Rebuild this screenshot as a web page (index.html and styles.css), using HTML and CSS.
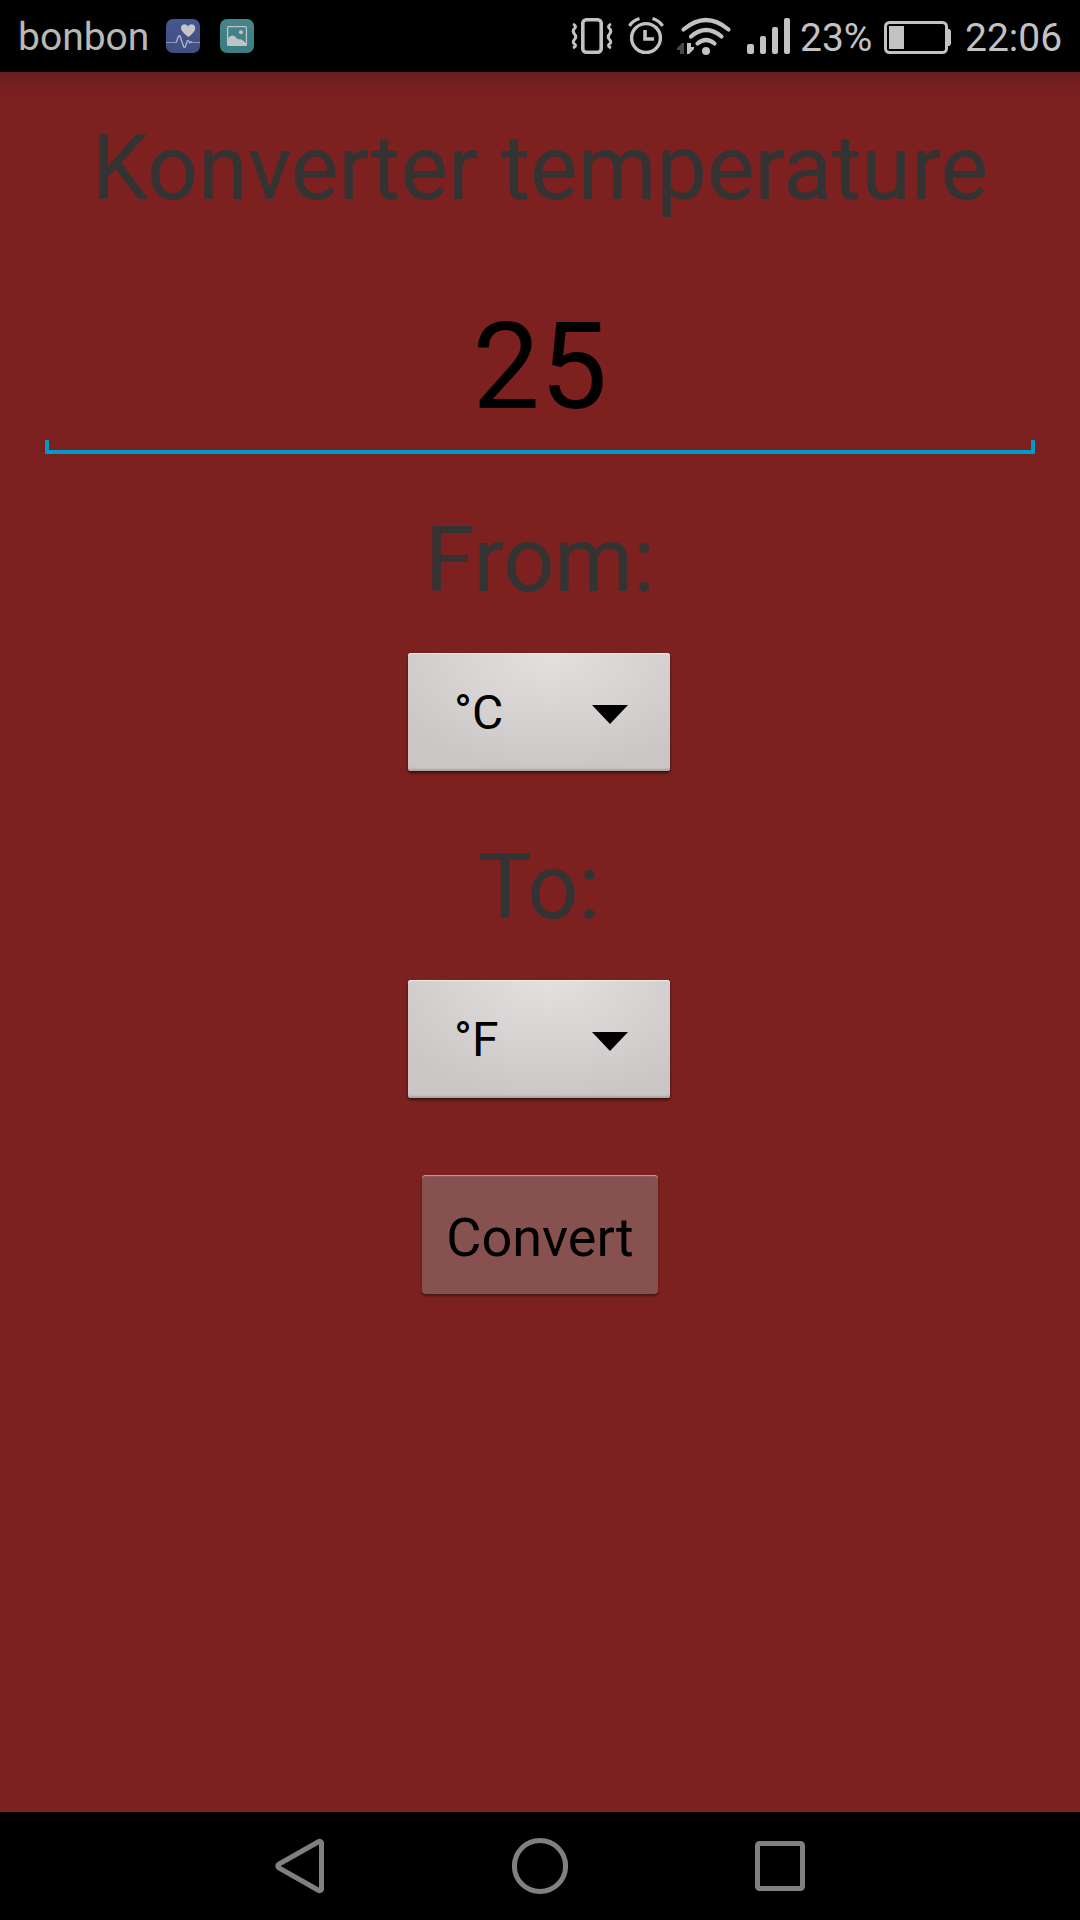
FILE: index.html
```html
<!DOCTYPE html>
<html lang="en">
<head>
<meta charset="utf-8">
<title>Konverter temperature</title>
<link rel="stylesheet" href="styles.css">
</head>
<body>
<div class="screen">
  <header class="status">
    <span class="carrier">bonbon</span>
    <svg class="app-icon health" viewBox="0 0 34 34">
      <defs><linearGradient id="blue" x2="0" y2="1"><stop stop-color="#46568f"/><stop offset="1" stop-color="#414e80"/></linearGradient></defs>
      <rect width="34" height="34" rx="7" fill="url(#blue)"/>
      <path d="M22.500 18C17 13.800 15 11.500 15 9C15 5 20 4 22.200 7.500C24 4 29.300 5 29.300 9C29.300 12 27 14.500 22.500 18Z" fill="#c6c6c8"/>
      <path d="M0 23.500H10M25 23.500H34" stroke="#8e96b4" fill="none"/>
      <path d="M10 23.500L11 21.500C12.500 16 14 15 15 20L17 26C18.500 31 19.500 28 20.500 24C21.500 20.500 22.500 20.500 23.500 24L25 22.800L26 23.500" stroke="#b5bacb" stroke-width="1.300" fill="none"/>
    </svg>
    <svg class="app-icon" viewBox="0 0 34 34">
      <defs><linearGradient id="teal" x2="0" y2="1"><stop stop-color="#48858a"/><stop offset="1" stop-color="#387e82"/></linearGradient></defs>
      <rect width="34" height="34" rx="7" fill="url(#teal)"/>
      <rect x="7.600" y="7.600" width="18.800" height="18.800" rx="1" fill="none" stroke="#bfc3c3" stroke-width="1.300"/>
      <circle cx="21" cy="13.300" r="2" fill="#bfc3c3"/>
      <path d="M8 19C11 15.500 14 15.500 17 19.500C19 21.500 20 19 23 21.500L26 24V26H8Z" fill="#bfc3c3"/>
    </svg>
    <svg class="system" viewBox="0 0 230 72" fill="none" stroke="#c2c2c2">
      <rect x="12.800" y="19.800" width="18.400" height="32.400" rx="3.500" stroke-width="3.600"/>
      <path d="M3 24Q7 26 4.500 28.500T4.500 34T4.500 39.500T4.500 44T3 48M41 24Q37 26 39.500 28.500T39.500 34T39.500 39.500T39.500 44T41 48" stroke-width="3"/>
      <circle cx="76" cy="38" r="14.400" stroke-width="3.400"/>
      <path d="M75 30V39H84" stroke-width="3.600"/>
      <path d="M59.500 26Q62 21 69.500 18.500M92.500 26Q90 21 82.500 18.500" stroke-width="3.200"/>
      <g stroke-width="4.200" stroke-linecap="round">
        <path d="M113.500 29.500Q136 10.500 158.500 29.500"/>
        <path d="M121 36.500Q136 23.500 151.500 36.500"/>
        <path d="M127.500 43.500Q136 36.500 144.500 43.500"/>
      </g>
      <circle cx="136" cy="51" r="4" fill="#c2c2c2" stroke="none"/>
      <path d="M114 43V54H110V50H107V48L112 43Z" fill="#484848" stroke="none"/>
      <path d="M117 43H121V47H124V49L119 54H117Z" fill="#c2c2c2" stroke="none"/>
      <g fill="#c2c2c2" stroke="none">
        <rect x="177" y="44" width="7" height="10" rx="2"/>
        <rect x="190" y="36" width="6" height="18" rx="2"/>
        <rect x="202" y="27" width="6" height="27" rx="2"/>
        <rect x="214" y="18" width="6" height="36" rx="2"/>
      </g>
    </svg>
    <span class="percent">23%</span>
    <svg class="battery" viewBox="0 0 68 34" fill="none">
      <rect x="1.500" y="1.500" width="61" height="30" rx="4" stroke="#c2c2c2" stroke-width="3"/>
      <path d="M5 5H20V28H5ZM64 8H65.500L67 10V23L65.500 25H64Z" fill="#c2c2c2"/>
    </svg>
    <span class="clock">22:06</span>
  </header>
  <main class="converter">
    <h1 class="label title">Konverter temperature</h1>
    <div class="value">25</div>
    <div class="label from">From:</div>
    <div class="spinner"><span>°C</span><svg class="arrow" viewBox="0 0 36 19"><path d="M0 0H36L18 19Z"/></svg></div>
    <div class="label to">To:</div>
    <div class="spinner"><span>°F</span><svg class="arrow" viewBox="0 0 36 19"><path d="M0 0H36L18 19Z"/></svg></div>
    <button class="convert">Convert</button>
  </main>
  <nav class="nav">
    <svg viewBox="0 0 60 60"><path d="M51.500 6.500V53.500Q50.500 55.500 48 54L9 32Q6.500 30 9 28L48 6Q50.500 4.500 51.500 6.500Z"/></svg>
    <svg viewBox="0 0 60 60"><circle cx="30" cy="30" r="25.600"/></svg>
    <svg viewBox="0 0 60 60"><rect x="7.500" y="7.500" width="45" height="45" rx="2"/></svg>
  </nav>
</div>
</body>
</html>
```
FILE: styles.css
```css
* { box-sizing: border-box; }
body { margin: 0; font-family: Roboto, sans-serif; background: #000; }
svg { display: block; flex: none; }
.screen { width: 1080px; height: 1920px; display: flex; flex-direction: column; overflow: hidden; }
.status { height: 72px; display: flex; align-items: center; padding: 0 18px; color: #c2c2c2; background: #000; font-size: 39px; line-height: 72px; white-space: nowrap; }
.carrier { width: 148px; flex: none; padding-top: 2px; color: #b8b8b8; }
.app-icon { width: 34px; height: 34px; }
.health { margin-right: 20px; }
.system { width: 230px; height: 72px; margin-left: 316px; }
.percent { width: 84px; flex: none; padding-top: 3px; }
.battery { width: 68px; height: 34px; margin-top: 3px; }
.clock { margin-left: 13px; padding-top: 3px; }
.converter { height: 1740px; padding: 44px 45px 0; display: flex; flex-direction: column; align-items: center; background: linear-gradient(#691e1e, #751f1f 12px, #7c2120 36px); }
.label { margin: 0; font-size: 90px; font-weight: 400; line-height: 106px; letter-spacing: -0.1px; color: #333; white-space: nowrap; }
.value { width: 100%; height: 158px; margin-top: 74px; padding-top: 1px; text-align: center; font-size: 120px; line-height: 140px; color: #000;
  background: linear-gradient(#0099cc, #0099cc) left bottom / 100% 4px no-repeat, linear-gradient(#0099cc, #0099cc) left bottom / 4px 14px no-repeat, linear-gradient(#0099cc, #0099cc) right bottom / 4px 14px no-repeat; }
.from { margin-top: 54px; }
.to { margin: 64px 2px 0 0; }
.spinner { width: 262px; height: 118px; margin: 39px 2px 0 0; padding: 0 42px 0 46px; display: flex; align-items: center; justify-content: space-between; border-radius: 3px; font-size: 48px; line-height: 118px; color: #000;
  background: radial-gradient(ellipse 190px 120px at 54% 0, #e4e0df, #d5d2d1 55%, #cac6c5);
  box-shadow: inset 0 1px 1px #f0ecec, inset 0 -3px 2px -1px #aaa6a6, 0 2px 3px rgba(0,0,0,.55); }
.to + .spinner { margin-top: 39px; }
.spinner span { padding-top: 1px; }
.arrow { width: 36px; height: 19px; margin-top: 5px; }
.convert { width: 236px; height: 119px; margin-top: 77px; padding: 6px 0 0; border: 0; border-radius: 4px; background: #87514f; font: 54px/64px Roboto, sans-serif; color: #000; box-shadow: inset 0 2px 1px -1px #c79c9b, 0 2px 2px rgba(30,20,20,.6); }
.nav { height: 108px; display: flex; justify-content: center; gap: 180px; align-items: center; background: #000; }
.nav svg { width: 60px; height: 60px; fill: none; stroke: #808080; stroke-width: 5; }
```
